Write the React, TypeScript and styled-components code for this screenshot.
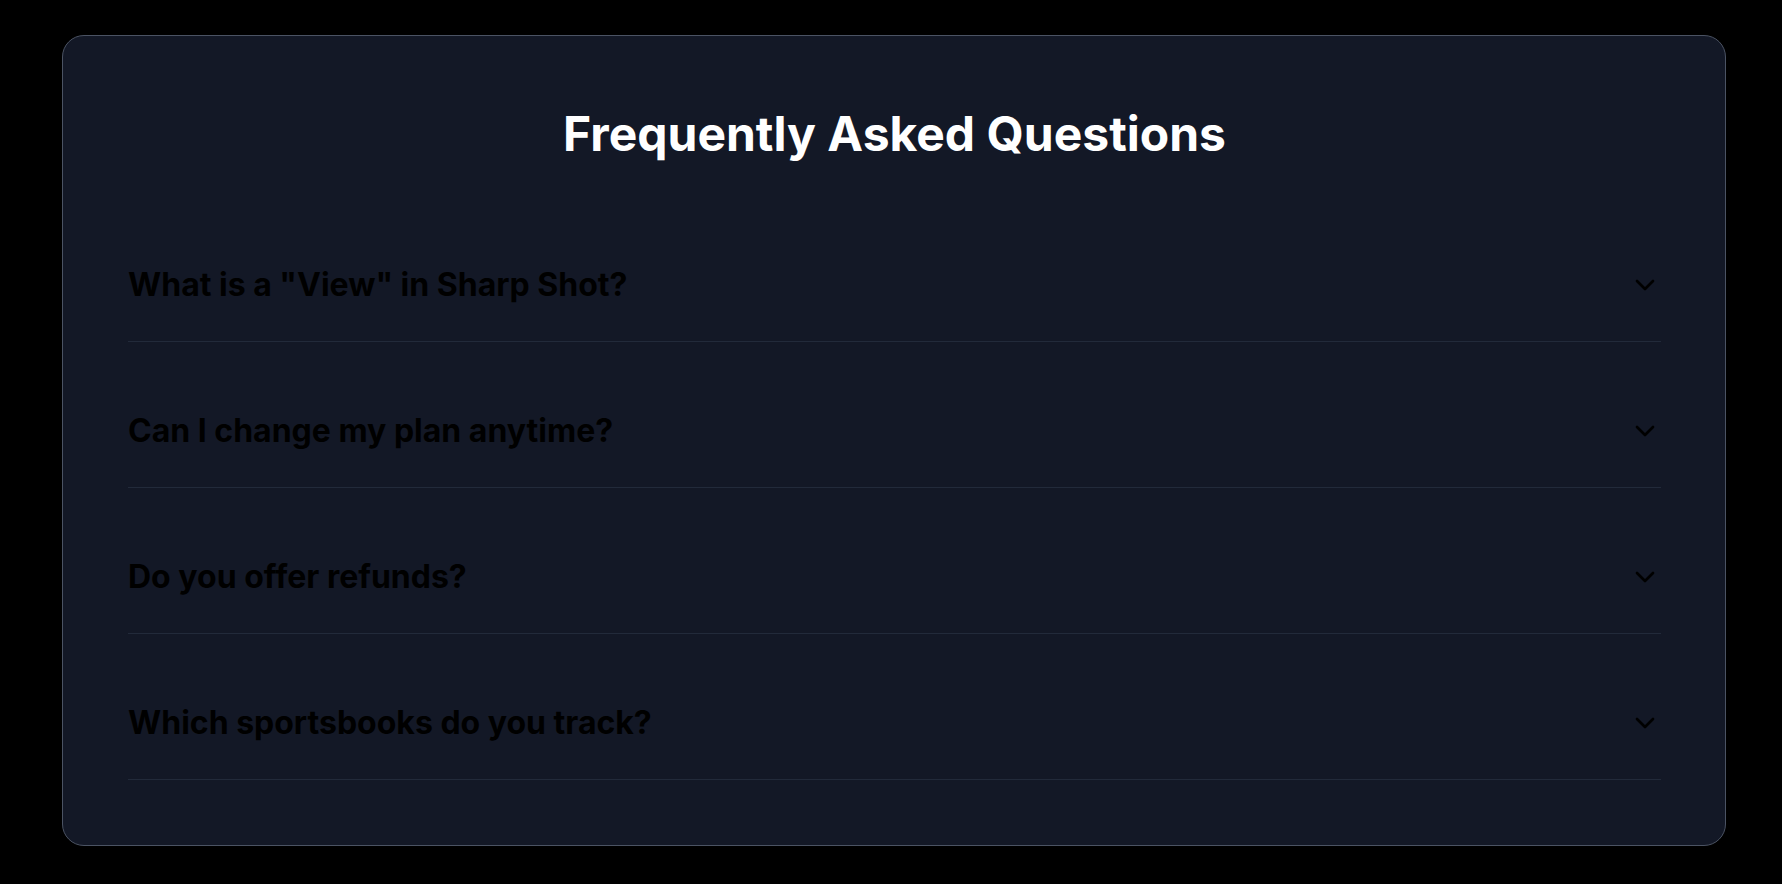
import React from "react";
import styled, { createGlobalStyle } from "styled-components";
import { ChevronDown } from "lucide-react";

const GlobalStyle = createGlobalStyle`
  html, body {
    margin: 0;
    padding: 0;
    background: #000000;
  }
  body {
    font-family: Inter, "Noto Sans", "Liberation Sans", sans-serif;
  }
  * { box-sizing: border-box; }
`;

const Page = styled.div`
  padding: 35px 56px 38px 62px;
`;

const Card = styled.section`
  background: #131826;
  border: 1px solid #4b5363;
  border-radius: 22px;
  padding: 64px 64px 65px 65px;
`;

const Title = styled.h2`
  margin: 0 0 60px 0;
  text-align: center;
  color: #ffffff;
  font-size: 48px;
  font-weight: 700;
  line-height: 68px;
  letter-spacing: 0;
`;

const List = styled.div`
  display: flex;
  flex-direction: column;
  gap: 32px;
`;

const Item = styled.div`
  border-bottom: 1px solid #222a3a;
`;

const QuestionButton = styled.button`
  width: 100%;
  display: flex;
  align-items: center;
  justify-content: space-between;
  background: transparent;
  border: none;
  padding: 38px 0;
  margin: 0;
  cursor: pointer;
  text-align: left;
  font-family: inherit;
`;

const QuestionText = styled.span`
  color: #000000;
  font-size: 32px;
  font-weight: 700;
  line-height: 37px;
`;

const Chevron = styled(ChevronDown)`
  color: #000000;
  flex-shrink: 0;
`;

const questions = [
  'What is a "View" in Sharp Shot?',
  "Can I change my plan anytime?",
  "Do you offer refunds?",
  "Which sportsbooks do you track?",
];

export default function App() {
  return (
    <>
      <GlobalStyle />
      <Page>
        <Card>
          <Title>Frequently Asked Questions</Title>
          <List>
            {questions.map((q) => (
              <Item key={q}>
                <QuestionButton type="button">
                  <QuestionText>{q}</QuestionText>
                  <Chevron size={32} strokeWidth={2} />
                </QuestionButton>
              </Item>
            ))}
          </List>
        </Card>
      </Page>
    </>
  );
}
